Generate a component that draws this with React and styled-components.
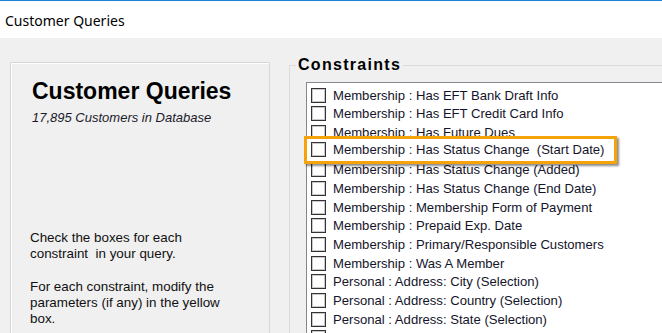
import React from "react";
import styled, { createGlobalStyle } from "styled-components";

const GlobalStyle = createGlobalStyle`
  body {
    margin: 0;
    background: #f0f0f0;
    overflow: hidden;
  }
`;

const Window = styled.div`
  width: 662px;
  height: 333px;
  overflow: hidden;
  display: flex;
  flex-direction: column;
  background: #f0f0f0;
  font-family: "Liberation Sans", Arial, sans-serif;
`;

const TitleBar = styled.div`
  height: 38px;
  flex-shrink: 0;
  box-sizing: border-box;
  border-top: 1px solid #1883d7;
  background: #ffffff;
  display: flex;
  align-items: center;
  padding: 1px 0 0 5px;
  font-family: "Noto Sans", "Open Sans", sans-serif;
  font-size: 14px;
  color: #000;
`;

const Body = styled.div`
  flex: 1;
  display: flex;
  align-items: flex-start;
  padding: 18px 0 0 10px;
  min-height: 0;
`;

const InfoPanel = styled.div`
  width: 258px;
  height: 320px;
  flex-shrink: 0;
  margin-top: 6px;
  border: 1px solid #d6d6d6;
  box-shadow: inset 1px 1px 0 #ffffff;
  padding-top: 15px;
  color: #000;
`;

const Heading = styled.h1`
  margin: 0 0 6px 21px;
  font-size: 23px;
  line-height: 26px;
  font-weight: bold;
`;

const Subtitle = styled.div`
  margin-left: 21px;
  font-size: 13px;
  line-height: 16px;
  font-style: italic;
  color: #1a1a2a;
`;

const Instructions = styled.div`
  margin: 104px 0 0 19px;
  font-size: 13.4px;
  line-height: 16px;
  color: #111;

  p {
    margin: 0 0 17px;
  }
`;

const GroupBox = styled.fieldset`
  flex: 1;
  margin: 0 0 0 19px;
  padding: 0 0 0 16px;
  height: 320px;
  border: none;
  border-top: 1px solid #dcdcdc;
  border-left: 1px solid #dcdcdc;
  min-width: 0;
`;

const Legend = styled.legend`
  margin-left: -10px;
  padding: 0 2px;
  font-size: 16px;
  line-height: 18px;
  font-weight: bold;
  letter-spacing: 1.3px;
  color: #000;
`;

const ListBox = styled.div`
  margin-top: 8px;
  width: 420px;
  height: 300px;
  background: #ffffff;
  border: 1px solid #828790;
  padding-top: 3px;
`;

const Row = styled.div`
  position: relative;
  height: 18.67px;
  display: flex;
  align-items: center;
  padding-left: 4px;
  font-size: 13.1px;
  color: #14142a;
  white-space: pre;
`;

const Box = styled.span`
  width: 13px;
  height: 13px;
  flex-shrink: 0;
  border: 1px solid #333;
  box-shadow: inset 0 0 0 1px #c8c8c8;
  background: #fff;
  margin-right: 7px;
`;

const Highlight = styled.div`
  position: absolute;
  top: -6px;
  left: -3px;
  width: 313px;
  height: 28px;
  box-sizing: border-box;
  border: 3px solid #f6a20b;
  background: #ffffff;
  box-shadow: 2px 2px 2px rgba(0, 0, 0, 0.45);
  display: flex;
  align-items: center;
  padding-left: 4px;
  z-index: 1;
`;

const constraints = [
  "Membership : Has EFT Bank Draft Info",
  "Membership : Has EFT Credit Card Info",
  "Membership : Has Future Dues",
  "Membership : Has Status Change  (Start Date)",
  "Membership : Has Status Change (Added)",
  "Membership : Has Status Change (End Date)",
  "Membership : Membership Form of Payment",
  "Membership : Prepaid Exp. Date",
  "Membership : Primary/Responsible Customers",
  "Membership : Was A Member",
  "Personal : Address: City (Selection)",
  "Personal : Address: Country (Selection)",
  "Personal : Address: State (Selection)",
  "Personal : Age in Years (Selection)",
];

const highlighted = 3;

function App() {
  return (
    <Window>
      <GlobalStyle />
      <TitleBar>Customer Queries</TitleBar>
      <Body>
        <InfoPanel>
          <Heading>Customer Queries</Heading>
          <Subtitle>17,895 Customers in Database</Subtitle>
          <Instructions>
            <p>
              Check the boxes for each
              <br />
              constraint&nbsp; in your query.
            </p>
            <p>
              For each constraint, modify the
              <br />
              parameters (if any) in the yellow
              <br />
              box.
            </p>
          </Instructions>
        </InfoPanel>
        <GroupBox>
          <Legend>Constraints</Legend>
          <ListBox>
            {constraints.map((label, i) => (
              <Row key={label}>
                <Box />
                {label}
                {i === highlighted && (
                  <Highlight>
                    <Box />
                    {label}
                  </Highlight>
                )}
              </Row>
            ))}
          </ListBox>
        </GroupBox>
      </Body>
    </Window>
  );
}

export default App;
